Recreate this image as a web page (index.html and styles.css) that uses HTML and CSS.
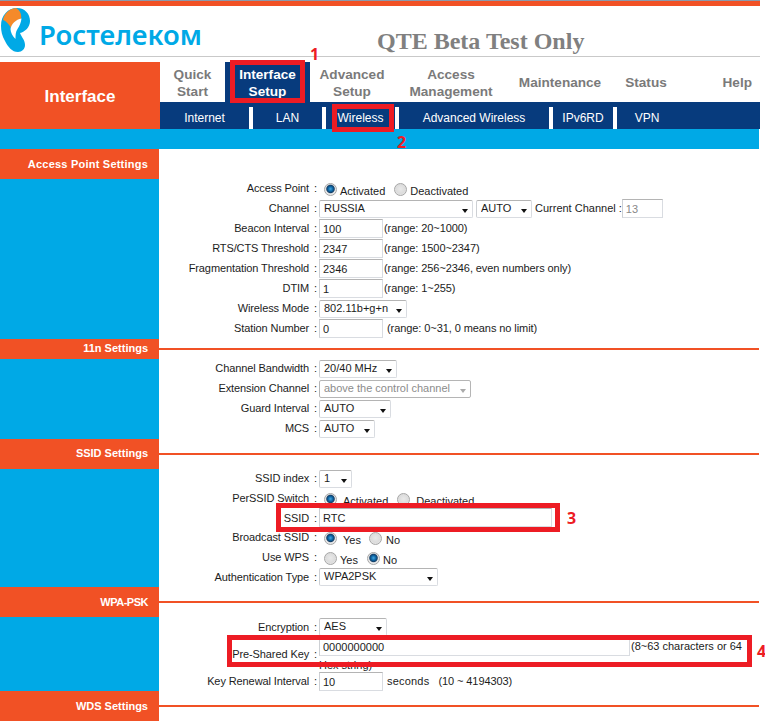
FILE: index.html
```html
<!DOCTYPE html>
<html lang="en">
<head>
<meta charset="utf-8">
<title>Wireless - Interface Setup</title>
<link rel="stylesheet" href="styles.css">
</head>
<body>
<div class="page">
  <div class="topstrip"></div>
  <header class="brand">
    <div class="logo">
      <svg class="logo-icon" viewBox="0 0 31 46" width="31" height="46" aria-hidden="true">
        <g transform="translate(0,-7)">
          <path fill="#00a9e6" d="M17 8C25 8 30 14 30 21C30 27 25 32 20 33C22 38 25 40 25 45C25 49 22 52 18 52C12 52 8 47 5 41C2 36 1 31 1 26C1 15 8 8 17 8Z"/>
          <path fill="#f58a2a" d="M16 8C9 8.500 4 14 3 20C6 21 9 24 11 28C12 24 16 20 21 19C22 15 20 10 16 8Z"/>
          <path fill="#fff" d="M21.500 18.500C16 19.500 11 24 10.500 29C10.500 32.500 12.500 36 15.500 39C15.500 35 15.500 32 17.500 29C19.500 26 21 23 21.500 18.500Z"/>
        </g>
      </svg>
      <span class="logo-text">Ростелеком</span>
    </div>
    <div class="beta">QTE Beta Test Only</div>
  </header>

  <nav class="nav">
    <div class="nav-title">Interface</div>
    <div class="nav-main">
      <div class="tabs">
        <a class="tab two t-quick">Quick<br>Start</a>
        <a class="tab two t-iface active">Interface<br>Setup</a>
        <a class="tab two t-adv">Advanced<br>Setup</a>
        <a class="tab two t-access">Access<br>Management</a>
        <a class="tab t-maint">Maintenance</a>
        <a class="tab t-status">Status</a>
        <a class="tab t-help">Help</a>
      </div>
      <div class="subnav">
        <a class="sub s-internet">Internet</a>
        <a class="sub s-lan">LAN</a>
        <a class="sub s-wireless">Wireless</a>
        <a class="sub s-advw">Advanced Wireless</a>
        <a class="sub s-ipv6">IPv6RD</a>
        <a class="sub s-vpn">VPN</a>
      </div>
    </div>
  </nav>
  <div class="cyanbar"></div>

  <section class="sec">
    <h3 class="head head-ap">Access Point Settings</h3>
    <div class="headline none"></div>
    <div class="side"></div>
    <div class="rows">
      <div class="row">
        <span class="lab">Access Point <i>:</i></span>
        <div class="ctl">
          <label class="opt"><input type="radio" name="ap" checked><span>Activated</span></label>
          <label class="opt opt-ap2"><input type="radio" name="ap"><span>Deactivated</span></label>
        </div>
      </div>
      <div class="row">
        <span class="lab">Channel <i>:</i></span>
        <div class="ctl">
          <span class="sel w-channel"><select><option>RUSSIA</option></select></span>
          <span class="sel w-auto1"><select><option>AUTO</option></select></span>
          <span class="hint cur">Current Channel :</span>
          <input class="field w-cur" type="text" value="13" disabled>
        </div>
      </div>
      <div class="row"><span class="lab">Beacon Interval <i>:</i></span><div class="ctl"><input class="field w-num" type="text" value="100"><span class="hint">(range: 20~1000)</span></div></div>
      <div class="row"><span class="lab">RTS/CTS Threshold <i>:</i></span><div class="ctl"><input class="field w-num" type="text" value="2347"><span class="hint">(range: 1500~2347)</span></div></div>
      <div class="row"><span class="lab">Fragmentation Threshold <i>:</i></span><div class="ctl"><input class="field w-num" type="text" value="2346"><span class="hint">(range: 256~2346, even numbers only)</span></div></div>
      <div class="row"><span class="lab">DTIM <i>:</i></span><div class="ctl"><input class="field w-num" type="text" value="1"><span class="hint">(range: 1~255)</span></div></div>
      <div class="row"><span class="lab">Wireless Mode <i>:</i></span><div class="ctl"><span class="sel w-mode"><select><option>802.11b+g+n</option></select></span></div></div>
      <div class="row"><span class="lab">Station Number <i>:</i></span><div class="ctl"><input class="field w-num" type="text" value="0"><span class="hint wide">(range: 0~31, 0 means no limit)</span></div></div>
    </div>
  </section>

  <section class="sec sec-thin">
    <h3 class="head head-up">11n Settings</h3>
    <div class="headline"></div>
    <div class="side"></div>
    <div class="rows">
      <div class="row"><span class="lab">Channel Bandwidth <i>:</i></span><div class="ctl"><span class="sel w-band"><select><option>20/40 MHz</option></select></span></div></div>
      <div class="row"><span class="lab">Extension Channel <i>:</i></span><div class="ctl"><span class="sel w-ext off"><select disabled><option>above the control channel</option></select></span></div></div>
      <div class="row"><span class="lab">Guard Interval <i>:</i></span><div class="ctl"><span class="sel w-guard"><select><option>AUTO</option></select></span></div></div>
      <div class="row"><span class="lab">MCS <i>:</i></span><div class="ctl"><span class="sel w-mcs"><select><option>AUTO</option></select></span></div></div>
    </div>
  </section>

  <section class="sec">
    <h3 class="head head-up">SSID Settings</h3>
    <div class="headline"></div>
    <div class="side"></div>
    <div class="rows">
      <div class="row"><span class="lab">SSID index <i>:</i></span><div class="ctl"><span class="sel w-idx"><select><option>1</option></select></span></div></div>
      <div class="row">
        <span class="lab">PerSSID Switch <i>:</i></span>
        <div class="ctl">
          <label class="opt opt-s1"><input type="radio" name="per" checked><span>Activated</span></label>
          <label class="opt opt-s2"><input type="radio" name="per"><span>Deactivated</span></label>
        </div>
      </div>
      <div class="row row-short"><span class="lab">SSID <i>:</i></span><div class="ctl"><input class="field w-ssid up" type="text" value="RTC"></div></div>
      <div class="row">
        <span class="lab">Broadcast SSID <i>:</i></span>
        <div class="ctl">
          <label class="opt opt-s1"><input type="radio" name="bc" checked><span>Yes</span></label>
          <label class="opt opt-no1"><input type="radio" name="bc"><span>No</span></label>
        </div>
      </div>
      <div class="row">
        <span class="lab">Use WPS <i>:</i></span>
        <div class="ctl">
          <label class="opt"><input type="radio" name="wps"><span>Yes</span></label>
          <label class="opt opt-no2"><input type="radio" name="wps" checked><span>No</span></label>
        </div>
      </div>
      <div class="row row-short"><span class="lab">Authentication Type <i>:</i></span><div class="ctl"><span class="sel w-authn flush"><select><option>WPA2PSK</option></select></span></div></div>
    </div>
  </section>

  <section class="sec">
    <h3 class="head head-wpa">WPA-PSK</h3>
    <div class="headline"></div>
    <div class="side"></div>
    <div class="rows">
      <div class="row"><span class="lab lab-low">Encryption <i>:</i></span><div class="ctl"><span class="sel w-enc"><select><option>AES</option></select></span></div></div>
      <div class="row row-psk">
        <span class="lab lab-psk">Pre-Shared Key <i>:</i></span>
        <div class="psk"><input class="field w-psk" type="text" value="0000000000"><span class="psk-note">(8~63 characters or 64 Hex string)</span></div>
      </div>
      <div class="row row-short"><span class="lab">Key Renewal Interval <i>:</i></span><div class="ctl"><input class="field w-num" type="text" value="10"><span class="hint wide secs">seconds</span><span class="hint renew">(10 ~ 4194303)</span></div></div>
    </div>
  </section>

  <section class="sec">
    <h3 class="head">WDS Settings</h3>
    <div class="headline"></div>
  </section>

  <div class="mark m1"></div><span class="num n1">1</span>
  <div class="mark m2"></div><span class="num n2">2</span>
  <div class="mark m3"></div><span class="num n3">3</span>
  <div class="mark m4"></div><span class="num n4">4</span>
</div>
</body>
</html>
```

FILE: styles.css
```css
* { box-sizing: border-box; }
html, body { margin: 0; padding: 0; background: #fff; }
body { font-family: "Liberation Sans", Arial, sans-serif; font-size: 11px; color: #1c1c1c; }
.page { position: relative; width: 765px; height: 721px; overflow: hidden; }

.topstrip { width: 760px; height: 6px; background: #f15125; border-top: 1px solid #8c99ab; }

.brand { width: 760px; height: 51px; border-bottom: 1px solid #c9c9c9; display: flex; }
.logo { width: 377px; display: flex; align-items: flex-start; padding-top: 1px; }
.logo-text { margin: 10px 0 0 8px; font-family: "Noto Sans", sans-serif; font-size: 27.4px; line-height: 36px; font-weight: 600; color: #00a9e6; }
.beta { font-family: "Liberation Serif", serif; font-weight: 700; font-size: 24px; line-height: 28px; padding-top: 21px; color: #808080; }

.nav { width: 760px; height: 67px; margin-top: 5px; display: flex; }
.nav-title { width: 160px; background: #f15125; color: #fff; font-size: 17px; font-weight: 700; text-align: center; line-height: 69px; }
.nav-main { width: 600px; display: flex; flex-direction: column; }
.tabs { height: 40px; display: flex; }
.tab { display: flex; align-items: center; justify-content: center; text-align: center; font-size: 13.6px; line-height: 17px; font-weight: 700; color: #7a7a7a; }
.tab.two { padding-top: 2px; }
.tab.active { background: #073b7d; color: #fff; }
.t-quick { width: 65px; }
.t-iface { width: 85px; }
.t-adv { width: 84px; }
.t-access { width: 114px; }
.t-maint { width: 104px; }
.t-status { width: 68px; }
.t-help { flex: 1; justify-content: flex-end; padding-right: 8px; }
.subnav { height: 27px; background: #073b7d; padding-top: 5px; display: flex; }
.sub { height: 22px; display: flex; align-items: center; justify-content: center; color: #fff; font-size: 12px; border-right: 4px solid #fff; }
.s-internet { width: 93px; }
.s-lan, .s-wireless { width: 73px; }
.s-advw { width: 154px; }
.s-ipv6 { width: 64px; }
.s-vpn { width: 60px; border-right: 0; }

.cyanbar { width: 759px; height: 20px; background: #00a9e6; }

.sec { display: grid; grid-template-columns: 159px 600px; grid-template-rows: 30px auto; width: 759px; }
.sec-thin { grid-template-rows: 20px auto; }
.head { margin: 0; background: #f15125; color: #fff; font-size: 11px; font-weight: 700; text-align: right; padding-right: 11px; display: flex; align-items: center; justify-content: flex-end; }
.head-ap { letter-spacing: .22px; }
.head-wpa { letter-spacing: -.5px; }
.head-up { padding-bottom: 2px; }
.headline { align-self: center; height: 2px; background: #f15125; }
.headline.none { background: none; }
.side { background: #00a9e6; }
.rows { display: flex; flex-direction: column; }

.row { display: flex; height: 20px; align-items: flex-start; }
.row-short { height: 19px; }
.row-psk { height: 35px; }
.lab { width: 160px; flex: none; text-align: right; padding-right: 2px; line-height: 18px; white-space: nowrap; letter-spacing: -.1px; }
.lab i { font-style: normal; margin-left: 2px; }
.lab-low { padding-top: 1px; }
.lab-psk { padding-top: 8px; }
.ctl { display: flex; align-items: flex-start; }
.hint { line-height: 18px; margin-left: 1px; white-space: nowrap; letter-spacing: -.08px; }
.hint.wide { margin-left: 4px; }
.hint.secs { letter-spacing: .2px; }
.hint.renew { margin-left: 9px; }
.hint.cur { margin-left: 3px; letter-spacing: 0; }

.field { display: block; height: 19px; padding: 0 3px; border: 1px solid #d9dce1; border-top-color: #b4b4b4; border-left-color: #cdd0d4; background: #fff; font: 11px "Liberation Sans", Arial, sans-serif; color: #1c1c1c; outline: 0; }
.field:disabled { color: #888; }
.up { margin-top: -1px; }
.w-num { width: 64px; }
.w-cur { width: 41px; }
.w-ssid { width: 233px; }
.w-psk { width: 311px; display: inline-block; vertical-align: top; margin-top: 1px; height: 18px; }

.sel { position: relative; display: block; height: 18px; margin-top: 1px; }
.sel.flush { margin-top: 0; }
.sel select { appearance: none; -webkit-appearance: none; display: block; width: 100%; height: 100%; padding: 0 0 3px 4px; border: 1px solid #d9dce1; border-top-color: #b4b4b4; border-left-color: #cdd0d4; border-radius: 2px; background: #fff; font: 11px "Liberation Sans", Arial, sans-serif; color: #1c1c1c; outline: 0; }
.sel::after { content: ""; position: absolute; right: 5px; top: 9px; border-style: solid; border-width: 4px 3.5px 0; border-color: #111 transparent transparent; }
.sel.off select { color: #8c8c8c; opacity: 1; border-color: #b5b5b5; }
.sel.off::after { border-top-color: #aaa; }
.w-channel { width: 154px; }
.w-auto1 { width: 56px; margin-left: 3px; }
.w-mode { width: 88px; }
.w-band { width: 78px; }
.w-ext { width: 152px; }
.w-guard { width: 72px; }
.w-mcs { width: 56px; }
.w-idx { width: 33px; }
.w-authn { width: 119px; }
.w-enc { width: 68px; }

.opt { display: flex; align-items: flex-start; }
.opt span { line-height: 18px; padding-top: 3px; margin-left: 3px; }
.opt input { appearance: none; -webkit-appearance: none; width: 13px; height: 13px; margin: 4px 0 0 5px; border-radius: 50%; border: 1px solid #a6a6a6; background: radial-gradient(circle at 50% 45%, #e9e9e9 0, #dcdcdc 55%, #f4f4f4 100%); }
.opt input:checked { background: radial-gradient(circle at 50% 45%, #4aa7dc 0, #0a67a8 28%, #163f66 46%, #e6e6e6 58%, #f4f4f4 100%); }
.opt-ap2 input { margin-left: 9px; }
.opt-s1 span { margin-left: 6px; }
.opt-s2 input { margin-left: 9px; }
.opt-s2 span { margin-left: 6px; }
.opt-no1 input { margin-left: 8px; }
.opt-no1 span { margin-left: 4px; }
.opt-no2 input { margin-left: 9px; }

.psk { width: 426px; line-height: 19px; }
.psk-note { margin-left: 1px; vertical-align: top; line-height: 18px; }

.mark { position: absolute; border: 5px solid #ed1c24; }
.m1 { left: 230px; top: 60px; width: 75px; height: 43px; }
.m2 { left: 332px; top: 104px; width: 62px; height: 28px; }
.m3 { left: 276px; top: 503px; width: 284px; height: 29px; }
.m4 { left: 227px; top: 635px; width: 525px; height: 32px; }
.num { position: absolute; font-family: "Noto Sans", sans-serif; font-weight: 700; font-size: 16px; line-height: 16px; color: #ed1c24; }
.n1 { left: 310px; top: 46px; }
.n2 { left: 397px; top: 134px; }
.n3 { left: 567px; top: 510px; }
.n4 { left: 757px; top: 643px; }
```
